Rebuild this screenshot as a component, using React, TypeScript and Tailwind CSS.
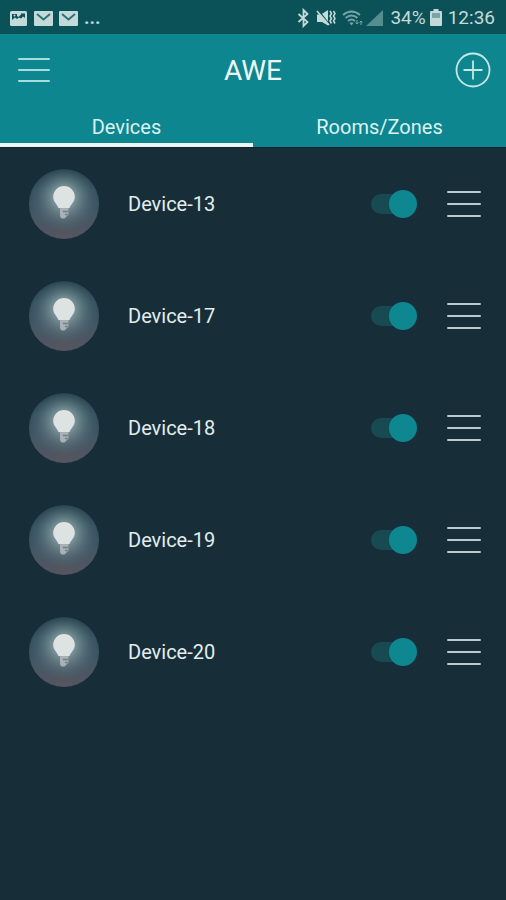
import { useState } from "react";

const initialDevices = [
  { id: 13, on: true },
  { id: 17, on: true },
  { id: 18, on: true },
  { id: 19, on: true },
  { id: 20, on: true },
];

function PictureIcon() {
  return (
    <svg className="h-[17px] w-[19px]" viewBox="0 0 19 17" aria-hidden="true">
      <rect x="1" y="1" width="17" height="15" rx="1.5" fill="#c3dad9" />
      <path d="M3 10V4h5v2l1.500 1L12 4.500V3.500h4V8l-2-1.500-2 2-2-1L8 9 6 7.500z" fill="#0a5257" />
      <circle cx="5.500" cy="5.500" r="1" fill="#c3dad9" />
    </svg>
  );
}

function MailIcon() {
  return (
    <svg className="h-[17px] w-[19px]" viewBox="0 0 19 17" aria-hidden="true">
      <rect x="0" y="1" width="19" height="15" rx="1" fill="#c3dad9" />
      <path d="M3 4l6.500 5.500L16 4" fill="none" stroke="#2c7075" strokeWidth="1.800" />
    </svg>
  );
}

function StatusBar() {
  return (
    <div className="flex h-[34px] items-center justify-between bg-[#0a5257] pt-[2px] pr-[11px] pl-[9px] text-[19px] leading-6 text-[#c3dad9]">
      <div className="flex items-center gap-[6px]">
        <PictureIcon />
        <MailIcon />
        <MailIcon />
        <span className="font-bold">...</span>
      </div>
      <div className="flex items-center">
        <svg className="mr-[6px] h-[20px] w-[13px]" viewBox="0 0 13 20" fill="none" stroke="currentColor" strokeWidth="1.800" aria-hidden="true">
          <path d="M1.500 6l9 8L6.500 18V2l4 4-9 8" />
        </svg>
        <svg className="mr-[6px] h-[20px] w-[20px]" viewBox="0 0 20 20" aria-hidden="true">
          <path d="M1 6.500h4L12 2v15.500L6 14H1z" fill="currentColor" />
          <path d="M2 2l11 14" stroke="#0a5257" strokeWidth="1.500" />
          <path d="M1 3l12 14" stroke="currentColor" strokeWidth="1.600" />
          <path d="M14 3l1.500 2.500-1.500 2.500 1.500 2.500-1.500 2.500 1.500 2.500M17.500 3l1.500 2.500-1.500 2.500 1.500 2.500-1.500 2.500 1.500 2.500" fill="none" stroke="currentColor" strokeWidth="1.500" />
        </svg>
        <svg className="mr-[2px] h-[20px] w-[22px]" viewBox="0 0 22 20" fill="none" stroke="#78a5a7" strokeWidth="1.800" aria-hidden="true">
          <path d="M1 7q8.500-7 17 0M3.500 10q6-5 12 0M6 13q3.500-3 7 0" />
          <path d="M7.500 15q2-1.500 4 0l-2 2.500z" fill="#78a5a7" stroke="none" />
          <path d="M15 12v4m-1.500-1.500L15 16l1.500-1.500M19 17v-4M17.500 14.500l1.500-1.500 1.500 1.500" strokeWidth="1" />
        </svg>
        <svg className="mr-[6px] h-[18px] w-[18px]" viewBox="0 0 18 18" aria-hidden="true">
          <path d="M17 1v16H0z" fill="#568d90" />
        </svg>
        <span>34%</span>
        <svg className="mr-[6px] ml-[4px] h-[20px] w-[12px]" viewBox="0 0 12 20" aria-hidden="true">
          <path d="M3.500 1h5v2H11q1 0 1 1v13q0 1-1 1H1q-1 0-1-1V4q0-1 1-1h2.500z" fill="#c3dad9" />
          <path d="M2 5h8v5H2z" fill="#78a5a7" />
        </svg>
        <span>12:36</span>
      </div>
    </div>
  );
}

function Bars({ className }: { className: string }) {
  return (
    <span className={`flex flex-col ${className}`} aria-hidden="true">
      <span className="h-[2px] rounded-full bg-current" />
      <span className="h-[2px] rounded-full bg-current" />
      <span className="h-[2px] rounded-full bg-current" />
    </span>
  );
}

function BulbBadge({ id }: { id: number }) {
  return (
    <svg className="h-[70px] w-[70px] shrink-0" viewBox="0 0 70 70" aria-hidden="true">
      <defs>
        <linearGradient id={`base-${id}`} x1="0" y1="0" x2="0" y2="1">
          <stop offset="0" stopColor="#1b3640" />
          <stop offset="0.300" stopColor="#304f5c" />
          <stop offset="0.650" stopColor="#435765" />
          <stop offset="1" stopColor="#56555e" />
        </linearGradient>
        <radialGradient id={`glow-${id}`} cx="0.500" cy="0.400" r="0.500">
          <stop offset="0" stopColor="#b2c4c3" stopOpacity="0.950" />
          <stop offset="0.300" stopColor="#94aaac" stopOpacity="0.750" />
          <stop offset="0.650" stopColor="#6c868e" stopOpacity="0.400" />
          <stop offset="1" stopColor="#506b77" stopOpacity="0" />
        </radialGradient>
      </defs>
      <circle cx="35" cy="35" r="35" fill={`url(#base-${id})`} />
      <circle cx="35" cy="35" r="35" fill={`url(#glow-${id})`} />
      <path d="M31 38h8.500v7q0 1.500-1.500 2l-2.500 2.500h-2q-2.500-.5-2.500-3z" fill="#a9b1b4" />
      <path d="M34 42.500h5.500M36 45.500h3" stroke="#747f86" strokeWidth="1.400" />
      <path d="M35 17a10.800 10.800 0 0 1 10.800 10.800c0 5-3.800 7.200-5.300 11.200h-11c-1.500-4-5.300-6.200-5.300-11.200A10.800 10.800 0 0 1 35 17z" fill="#dce3e2" />
    </svg>
  );
}

export default function App() {
  const [tab, setTab] = useState("Devices");
  const [devices, setDevices] = useState(initialDevices);

  const toggle = (id: number) =>
    setDevices((list) => list.map((d) => (d.id === id ? { ...d, on: !d.on } : d)));

  return (
    <div className="flex min-h-screen flex-col bg-[#172d37] font-[Roboto,sans-serif] text-[#e2eeee]">
      <StatusBar />
      <header className="border-b border-[#10242c] bg-[#0e868f]">
        <div className="flex h-[72px] items-center justify-between px-[15px]">
          <button type="button" aria-label="Menu" className="w-[36px] pl-[3px] text-[#a9dcdf]">
            <Bars className="w-[32px] gap-[9px]" />
          </button>
          <h1 className="pt-[2px] text-[28px] leading-8 text-[#eef7f7]">AWE</h1>
          <button type="button" aria-label="Add device">
            <svg className="h-[36px] w-[36px]" viewBox="0 0 36 36" fill="none" stroke="#c5e7e5" strokeWidth="1.800" aria-hidden="true">
              <circle cx="18" cy="18" r="16.500" />
              <path d="M18 8.500v19M8.500 18h19" />
            </svg>
          </button>
        </div>
        <div role="tablist" className="grid h-[41px] grid-cols-2">
          {["Devices", "Rooms/Zones"].map((name) => (
            <button
              key={name}
              type="button"
              role="tab"
              aria-selected={tab === name}
              onClick={() => setTab(name)}
              className="border-b-4 border-transparent pt-[5px] text-[20px] leading-6 text-[#dcf2f2] aria-selected:border-[#eef5f4]"
            >
              {name}
            </button>
          ))}
        </div>
      </header>
      <main className="grow">
        <ul>
          {devices.map(({ id, on }) => (
            <li key={id} className="flex h-28 items-center pr-[25px] pl-[29px]">
              <BulbBadge id={id} />
              <label htmlFor={`switch-${id}`} className="ml-[29px] grow text-[20px] leading-6">
                Device-{id}
              </label>
              <input
                id={`switch-${id}`}
                type="checkbox"
                role="switch"
                checked={on}
                onChange={() => toggle(id)}
                className="relative h-[28px] w-[46px] appearance-none before:absolute before:top-[4px] before:left-0 before:h-[20px] before:w-[40px] before:rounded-full before:bg-[#174a53] after:absolute after:top-0 after:left-0 after:h-[28px] after:w-[28px] after:rounded-full after:bg-[#78909c] checked:after:left-[18px] checked:after:bg-[#0f8790]"
              />
              <button type="button" aria-label={`Device-${id} options`} className="ml-[30px] text-[#bccad0]">
                <Bars className="w-[34px] gap-[10px]" />
              </button>
            </li>
          ))}
        </ul>
      </main>
    </div>
  );
}
